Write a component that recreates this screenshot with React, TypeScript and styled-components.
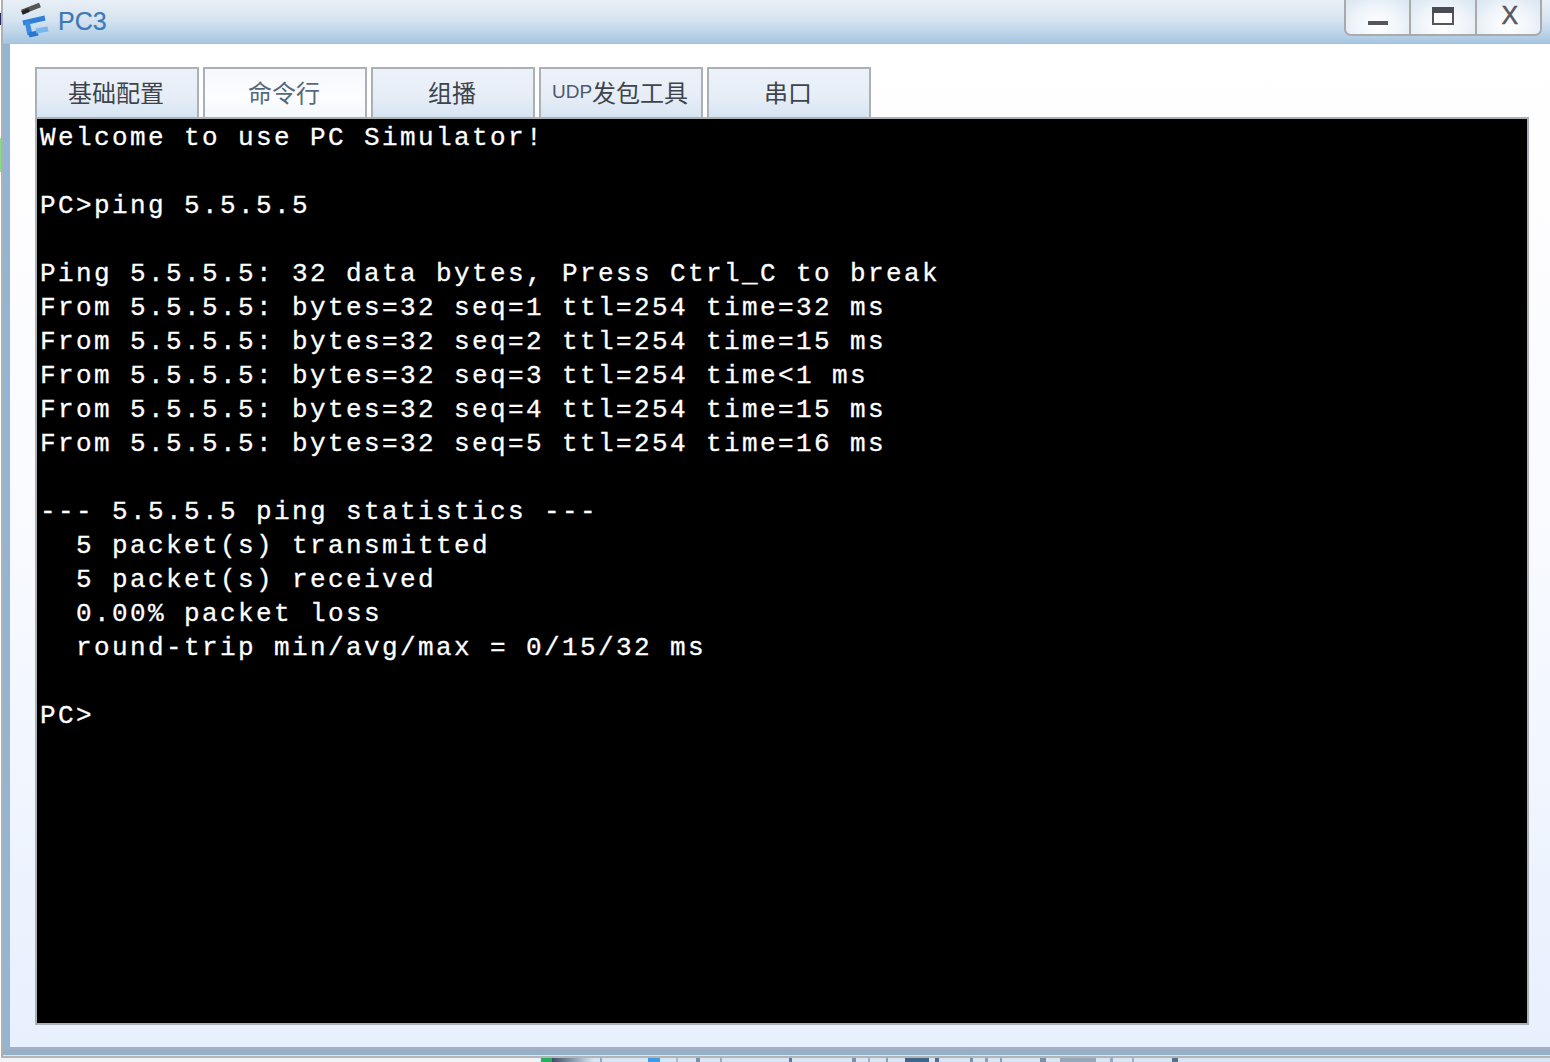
import React from "react";
import styled, { createGlobalStyle } from "styled-components";

const Global = createGlobalStyle`
  html, body { margin: 0; padding: 0; background: #fff; }
  #root { width: 1550px; height: 1062px; overflow: hidden; }
`;

const Page = styled.div`
  width: 1550px;
  height: 1062px;
  display: flex;
  flex-direction: column;
  overflow: hidden;
`;
const Upper = styled.div`
  height: 1058px;
  display: flex;
`;
const Gutter = styled.div`
  width: 1px;
  flex: none;
  background: linear-gradient(
    180deg,
    #fff 0 13px,
    #1c2a6c 13px 25px,
    #fff 25px 138px,
    #86e08a 138px 172px,
    #fff 172px 100%
  );
`;
const Window = styled.div`
  flex: 1;
  min-width: 0;
  display: flex;
  flex-direction: column;
  border-left: 2px solid #aeb0b2;
  border-bottom: 2px solid #b4b4b4;
`;
const TitleBar = styled.header`
  height: 44px;
  flex: none;
  box-sizing: border-box;
  display: flex;
  align-items: flex-start;
  justify-content: space-between;
  padding: 0 8px 0 17px;
  background: linear-gradient(180deg, #e9eff6 0%, #d6e4f0 45%, #a8c7e3 97%, #a2bcd4 100%);
`;
const TitleGroup = styled.div`
  display: flex;
  align-items: center;
  gap: 7px;
  height: 42px;
`;
const TitleText = styled.span`
  font: 25px "Liberation Sans", Arial, sans-serif;
  color: #3d78b8;
  -webkit-text-stroke: 0.2px #3d78b8;
`;
const Controls = styled.div`
  display: flex;
  width: 198px;
  height: 36px;
  box-sizing: border-box;
  border: 2px solid #aaaaaa;
  border-top: 0;
  border-radius: 0 0 7px 7px;
  overflow: hidden;
`;
const Control = styled.button<{ $first?: boolean }>`
  flex: 1;
  min-width: 0;
  padding: 0;
  border: 0;
  border-left: ${(p) => (p.$first ? "0" : "2px solid #aaaaaa")};
  background: radial-gradient(ellipse at 50% 75%, #ffffff 0%, #f0f5fa 50%, #d8e5f1 100%);
  display: flex;
  align-items: center;
  justify-content: center;
  color: #58585e;
  font: 25px "Liberation Sans", Arial, sans-serif;
  -webkit-text-stroke: 0.5px #58585e;
`;
const CloseGlyph = styled.span`
  margin: -4px 0 0 3px;
  line-height: 1;
`;
const Main = styled.div`
  flex: 1;
  min-height: 0;
  display: flex;
  padding-left: 7px;
  background: #94b4d4;
`;
const Panel = styled.main`
  flex: 1;
  min-width: 0;
  display: flex;
  flex-direction: column;
  box-sizing: border-box;
  padding: 23px 21px 22px 25px;
  background: linear-gradient(180deg, #ffffff 0%, #fdfdff 20%, #f8faff 50%, #e8f0fe 100%);
`;
const Tabs = styled.nav`
  display: flex;
  gap: 4px;
  height: 50px;
  flex: none;
`;
const Tab = styled.div<{ $active?: boolean }>`
  width: 164px;
  box-sizing: border-box;
  border: 2px solid #aab0b6;
  border-bottom: 0;
  display: flex;
  align-items: center;
  justify-content: center;
  padding: 0 2px 3px 0;
  background: ${(p) =>
    p.$active
      ? "linear-gradient(180deg, #f6f8fc 0%, #fcfdff 60%, #f3f7fc 100%)"
      : "linear-gradient(180deg, #edf2fa 0%, #e6edf6 60%, #d6e5f4 100%)"};
  color: ${(p) => (p.$active ? "#56697a" : "#3f444c")};
  font: 24px "Noto Sans CJK SC", "Liberation Sans", sans-serif;
`;
const Latin = styled.span`
  font: 19px "Liberation Sans", Arial, sans-serif;
  color: #4a5a70;
`;
const Terminal = styled.pre`
  flex: 1;
  min-height: 0;
  margin: 0;
  box-sizing: border-box;
  border: 2px solid #aab0b4;
  background: #000;
  color: #fff;
  padding: 2px 0 0 3px;
  font: 26px/34px "Liberation Mono", "Courier New", monospace;
  letter-spacing: 2.4px;
  -webkit-text-stroke: 0.3px #fff;
  overflow: hidden;
`;
const BottomBand = styled.div`
  height: 9px;
  flex: none;
  background: linear-gradient(
    180deg,
    #a4b0c0 0 3px,
    #94b0c8 3px 8px,
    #dfe6ec 8px 9px
  );
`;
const Strip = styled.svg`
  display: block;
  width: 1550px;
  height: 4px;
  flex: none;
`;

const termText = `Welcome to use PC Simulator!

PC>ping 5.5.5.5

Ping 5.5.5.5: 32 data bytes, Press Ctrl_C to break
From 5.5.5.5: bytes=32 seq=1 ttl=254 time=32 ms
From 5.5.5.5: bytes=32 seq=2 ttl=254 time=15 ms
From 5.5.5.5: bytes=32 seq=3 ttl=254 time<1 ms
From 5.5.5.5: bytes=32 seq=4 ttl=254 time=15 ms
From 5.5.5.5: bytes=32 seq=5 ttl=254 time=16 ms

--- 5.5.5.5 ping statistics ---
  5 packet(s) transmitted
  5 packet(s) received
  0.00% packet loss
  round-trip min/avg/max = 0/15/32 ms

PC>`;

const AppIcon = () => (
  <svg width="31" height="38" viewBox="0 0 31 38" fill="none">
    <path d="M2 10 L20 3" stroke="#555" strokeWidth="5" />
    <path d="M2 11 L9 8" stroke="#262626" strokeWidth="4" />
    <path d="M3 21 L25 16" stroke="#2f7fd6" strokeWidth="5" />
    <path d="M7 19 L10 33" stroke="#3a8ae0" strokeWidth="5" />
    <path d="M9 33 L18 31" stroke="#2a76d0" strokeWidth="5" />
    <path d="M16 29 L28 27" stroke="#79b6ee" strokeWidth="5" />
  </svg>
);

const MinIcon = () => (
  <svg width="22" height="34" viewBox="0 0 22 34">
    <rect x="1" y="21" width="20" height="4" fill="#55555c" />
  </svg>
);
const MaxIcon = () => (
  <svg width="24" height="34" viewBox="0 0 24 34">
    <rect x="2" y="8" width="20" height="16" fill="#fff" stroke="#55555c" strokeWidth="2" />
    <rect x="1" y="7" width="22" height="6" fill="#4c4c56" />
  </svg>
);

const debris: [number, number, string][] = [
  [541, 11, "#22b060"],
  [648, 12, "#3f9ae8"],
  [600, 2, "#90a8c0"],
  [676, 2, "#a8bccc"],
  [696, 4, "#7a90b0"],
  [720, 2, "#98acc0"],
  [789, 3, "#5a78a0"],
  [852, 4, "#7a90b0"],
  [868, 2, "#9ab0c6"],
  [886, 2, "#8aa0b8"],
  [905, 24, "#3f6688"],
  [935, 4, "#4f6f90"],
  [970, 3, "#7a90b0"],
  [985, 3, "#8aa0b8"],
  [1000, 2, "#8aa0b8"],
  [1040, 6, "#7a90a8"],
  [1060, 36, "#93a8bc"],
  [1110, 3, "#90a8c0"],
  [1132, 2, "#9ab0c6"],
  [1172, 6, "#50708c"],
];

export default function App() {
  return (
    <Page>
      <Global />
      <Upper>
        <Gutter />
        <Window>
          <TitleBar>
            <TitleGroup>
              <AppIcon />
              <TitleText>PC3</TitleText>
            </TitleGroup>
            <Controls>
              <Control $first aria-label="minimize">
                <MinIcon />
              </Control>
              <Control aria-label="maximize">
                <MaxIcon />
              </Control>
              <Control aria-label="close">
                <CloseGlyph>X</CloseGlyph>
              </Control>
            </Controls>
          </TitleBar>
          <Main>
            <Panel>
              <Tabs>
                <Tab>基础配置</Tab>
                <Tab $active>命令行</Tab>
                <Tab>组播</Tab>
                <Tab>
                  <Latin>UDP</Latin>发包工具
                </Tab>
                <Tab>串口</Tab>
              </Tabs>
              <Terminal>{termText}</Terminal>
            </Panel>
          </Main>
          <BottomBand />
        </Window>
      </Upper>
      <Strip viewBox="0 0 1550 4" preserveAspectRatio="none">
        <defs>
          <linearGradient id="fade" x1="0" x2="1" y1="0" y2="0">
            <stop offset="0" stopColor="#3a5068" />
            <stop offset="1" stopColor="#d8eafa" />
          </linearGradient>
        </defs>
        <rect width="1550" height="4" fill="#d6e8f8" />
        <rect width="540" height="4" fill="#eef4f8" />
        <rect x="552" width="42" height="4" fill="url(#fade)" />
        {debris.map(([x, w, c]) => (
          <rect key={x} x={x} width={w} height="4" fill={c} />
        ))}
      </Strip>
    </Page>
  );
}
